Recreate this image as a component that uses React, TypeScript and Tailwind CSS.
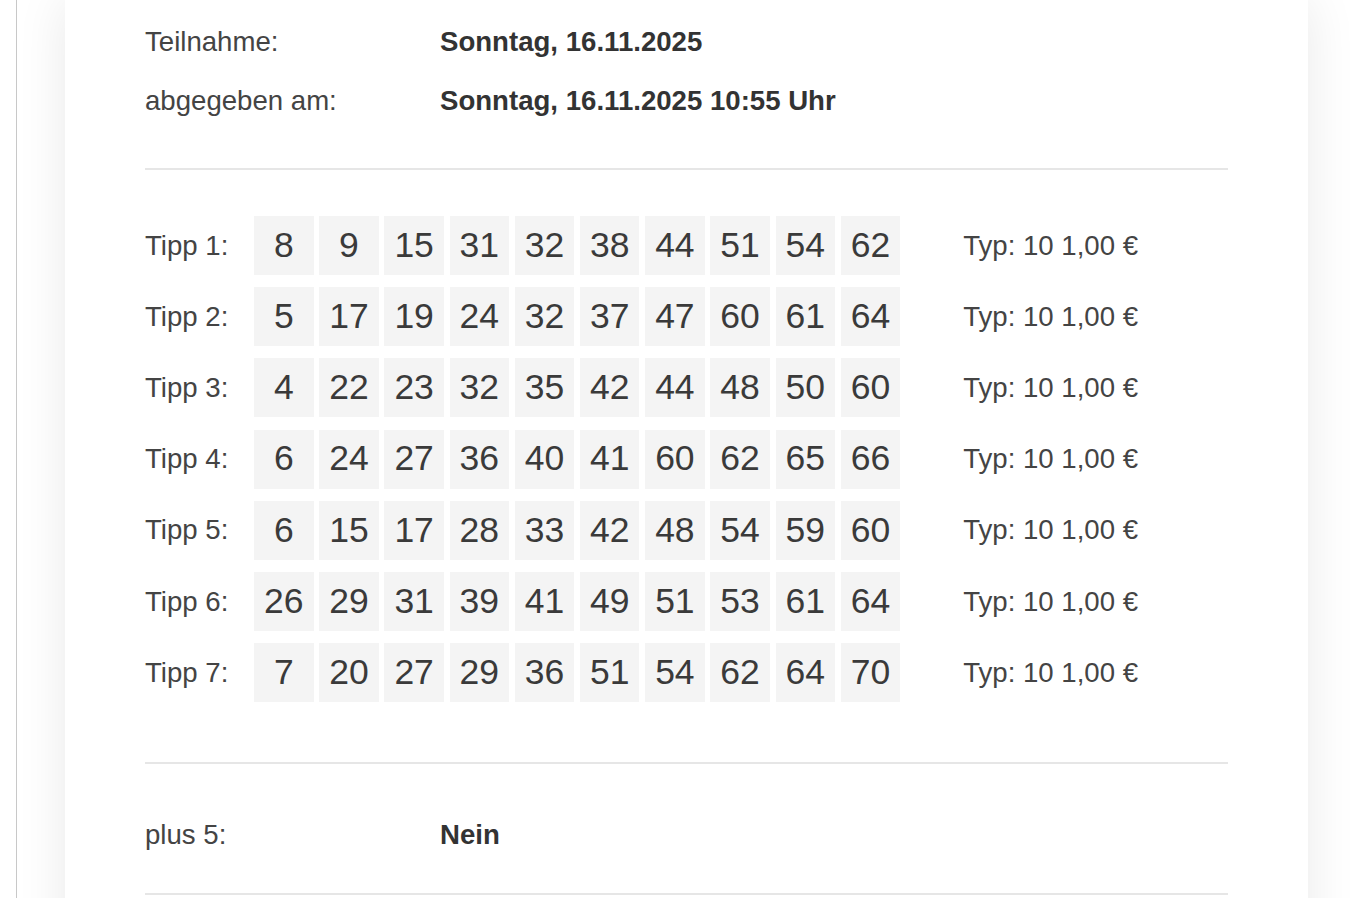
import React from 'react';

const tipps: number[][] = [
  [8, 9, 15, 31, 32, 38, 44, 51, 54, 62],
  [5, 17, 19, 24, 32, 37, 47, 60, 61, 64],
  [4, 22, 23, 32, 35, 42, 44, 48, 50, 60],
  [6, 24, 27, 36, 40, 41, 60, 62, 65, 66],
  [6, 15, 17, 28, 33, 42, 48, 54, 59, 60],
  [26, 29, 31, 39, 41, 49, 51, 53, 61, 64],
  [7, 20, 27, 29, 36, 51, 54, 62, 64, 70],
];

function InfoRow({ label, value }: { label: string; value: string }) {
  return (
    <div className="flex h-[59px] items-center">
      <div className="w-[295px] text-[#444]">{label}</div>
      <div className="font-bold text-[#333]">{value}</div>
    </div>
  );
}

function TippRow({ index, numbers }: { index: number; numbers: number[] }) {
  return (
    <div className="flex items-center">
      <div className="w-[109px] text-[#444]">Tipp {index}:</div>
      <div className="flex gap-[5.7px]">
        {numbers.map((n, i) => (
          <div
            key={i}
            className="flex h-[59px] w-[59.5px] items-center justify-center bg-[#f4f4f4] text-[35.5px] text-[#3a3a3a]"
          >
            {n}
          </div>
        ))}
      </div>
      <div className="ml-[63px] text-[#444]">Typ: 10 1,00 €</div>
    </div>
  );
}

export default function App() {
  return (
    <div className="min-h-screen bg-white font-['Liberation_Sans',Arial,sans-serif] text-[27.6px] leading-none">
      <div className="ml-4 min-h-screen border-l border-[#c8c8c8] pl-12 pr-[49px]">
        <div className="bg-white px-20 pt-3 pb-10 shadow-[0_0_48px_rgba(0,0,0,0.09)]">
          {/* Kopfdaten */}
          <InfoRow label="Teilnahme:" value="Sonntag, 16.11.2025" />
          <InfoRow label="abgegeben am:" value="Sonntag, 16.11.2025 10:55 Uhr" />

          <div className="mt-[38px] h-[2px] bg-[#e6e6e6]" />

          {/* Tipps */}
          <div className="mt-[46px] flex flex-col gap-y-[12.2px]">
            {tipps.map((t, i) => (
              <TippRow key={i} index={i + 1} numbers={t} />
            ))}
          </div>

          <div className="mt-[60px] h-[2px] bg-[#e6e6e6]" />

          <div className="mt-[41px] mb-[29px]">
            <InfoRow label="plus 5:" value="Nein" />
          </div>

          <div className="h-[2px] bg-[#e6e6e6]" />
          <div className="h-40" />
        </div>
      </div>
    </div>
  );
}
